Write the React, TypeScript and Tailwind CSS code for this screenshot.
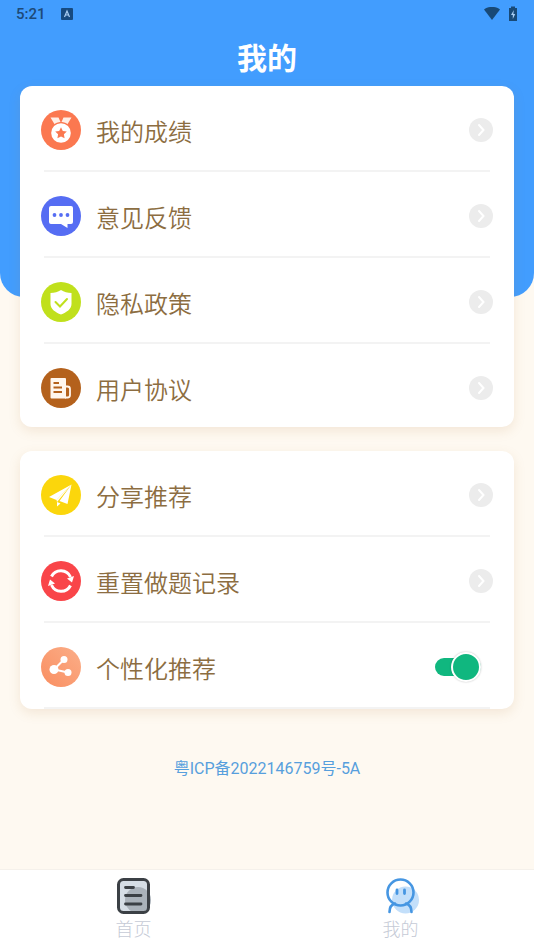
import React, { useState } from 'react';

interface MenuItem {
  label: string;
  icon: React.ReactNode;
}

const ScoreIcon = () => (
  <svg viewBox="0 0 40 40" className="size-10 shrink-0" aria-hidden="true">
    <circle cx="20" cy="20" r="20" fill="#fb7850" />
    <path d="M9.500 7.500h8l2 4.500-5.500 3zM30.500 7.500h-8l-2 4.500 5.500 3z" fill="#ffeee6" />
    <circle cx="20" cy="23" r="11" fill="#fb7850" />
    <circle cx="20" cy="23" r="9.800" fill="#fff" />
    <path
      d="M20 17.300l1.800 3.700 4 .5-2.900 2.800.7 4L20 26.400l-3.600 1.900.7-4-2.900-2.800 4-.5z"
      fill="#fb7850"
    />
  </svg>
);

const FeedbackIcon = () => (
  <svg viewBox="0 0 40 40" className="size-10 shrink-0" aria-hidden="true">
    <circle cx="20" cy="20" r="20" fill="#566df3" />
    <path d="M10 10h20a2 2 0 0 1 2 2v14a2 2 0 0 1-2 2h-3.500v4L20 28H10a2 2 0 0 1-2-2V12a2 2 0 0 1 2-2z" fill="#fff" />
    <circle cx="13.500" cy="19" r="1.900" fill="#566df3" />
    <circle cx="20" cy="19" r="1.900" fill="#566df3" />
    <circle cx="26.500" cy="19" r="1.900" fill="#566df3" />
  </svg>
);

const PrivacyIcon = () => (
  <svg viewBox="0 0 40 40" className="size-10 shrink-0" aria-hidden="true">
    <circle cx="20" cy="20" r="20" fill="#c0e01c" />
    <path d="M20 8c3 2 6.500 3 10.500 3v11c0 5-5 8.500-10.500 10.500C14.500 30.500 9.500 27 9.500 22V11c4 0 7.500-1 10.500-3z" fill="#fff" />
    <path d="M14.500 20l4.500 4.500 7-7.500" fill="none" stroke="#c0e01c" strokeWidth="2" strokeLinecap="round" />
  </svg>
);

const AgreementIcon = () => (
  <svg viewBox="0 0 40 40" className="size-10 shrink-0" aria-hidden="true">
    <circle cx="20" cy="20" r="20" fill="#b4611c" />
    <path d="M10.500 10H24a1 1 0 0 1 1 1v19.500H10.500a1 1 0 0 1-1-1V11a1 1 0 0 1 1-1z" fill="#fff6ee" />
    <path
      d="M25 18.500h1.500a2.500 2.500 0 0 1 2.500 2.500v6a2.500 2.500 0 0 1-2.500 2.500H24"
      fill="none"
      stroke="#fff6ee"
      strokeWidth="1.800"
    />
    <path d="M12.500 15h5.500M12.500 19.500h8.500M12.500 24h8.500" stroke="#b4611c" strokeWidth="1.800" />
  </svg>
);

const ShareIcon = () => (
  <svg viewBox="0 0 40 40" className="size-10 shrink-0" aria-hidden="true">
    <circle cx="20" cy="20" r="20" fill="#fbd60c" />
    <path d="M30.500 9.500L8 22l7.500 3zM30.500 9.500L18.500 26l8 3zM16 27v4.500l3.500-3z" fill="#fff" />
    <path d="M30.500 9.500L15.500 25l.5 2z" fill="#fff" />
  </svg>
);

const ResetIcon = () => (
  <svg viewBox="0 0 40 40" className="size-10 shrink-0" aria-hidden="true">
    <circle cx="20" cy="20" r="20" fill="#f94549" />
    <g fill="none" stroke="#fff" strokeWidth="3">
      <path d="M10.500 15.500a10.500 10.500 0 0 1 19 .5" />
      <path d="M29.500 24.500a10.500 10.500 0 0 1-19-.5" />
    </g>
    <path d="M33 15l-2 6.500-5-4zM7 25l2-6.500 5 4z" fill="#fff" />
  </svg>
);

const RecommendIcon = () => (
  <svg viewBox="0 0 40 40" className="size-10 shrink-0" aria-hidden="true">
    <defs>
      <linearGradient id="peach" x1="1" y1="0" x2="0" y2="1">
        <stop offset="0" stopColor="#fbae88" />
        <stop offset="1" stopColor="#f98e60" />
      </linearGradient>
    </defs>
    <circle cx="20" cy="20" r="20" fill="url(#peach)" />
    <path d="M23 12.500L13 22.500l14 3" fill="none" stroke="#fff" strokeWidth="2" />
    <circle cx="23" cy="12.500" r="3.500" fill="#fff" />
    <circle cx="13" cy="22.500" r="4.500" fill="#fff" />
    <circle cx="27" cy="25.500" r="3.500" fill="#fff" />
  </svg>
);

const ChevronIcon = () => (
  <svg viewBox="0 0 24 24" className="size-6 shrink-0" aria-hidden="true">
    <circle cx="12" cy="12" r="12" fill="#ececec" />
    <path d="M10 7l4.500 5-4.500 5" fill="none" stroke="#fff" strokeWidth="2" strokeLinecap="round" />
  </svg>
);

const HomeTabIcon = () => (
  <svg viewBox="0 0 36 36" className="size-9" aria-hidden="true">
    <rect x="2.500" y="1.500" width="30" height="33" rx="5" fill="#d5dde5" />
    <circle cx="22" cy="22" r="13" fill="#aab2ba" />
    <rect x="2.500" y="1.500" width="30" height="33" rx="5" fill="none" stroke="#3b4045" strokeWidth="3" />
    <path d="M9.500 9.500h8M9.500 17.500h15.500M9.500 26h15.500" stroke="#3b4045" strokeWidth="2.800" strokeLinecap="round" />
  </svg>
);

const MineTabIcon = () => (
  <svg viewBox="0 0 36 36" className="size-9" aria-hidden="true">
    <circle cx="22.500" cy="22" r="13.500" fill="#c3dffa" />
    <g fill="none" stroke="#4696e2" strokeWidth="2.600" strokeLinecap="round">
      <circle cx="17.500" cy="14.500" r="13" />
      <path d="M6.500 34c0-4.500 2-7.500 5.500-8.500M28.500 34c0-4.500-2-7.500-5.500-8.500" />
      <path d="M14 12v3.500M21.500 12v3.500" strokeWidth="2.800" />
    </g>
  </svg>
);

const mainItems: MenuItem[] = [
  { label: '我的成绩', icon: <ScoreIcon /> },
  { label: '意见反馈', icon: <FeedbackIcon /> },
  { label: '隐私政策', icon: <PrivacyIcon /> },
  { label: '用户协议', icon: <AgreementIcon /> },
];

const extraItems: MenuItem[] = [
  { label: '分享推荐', icon: <ShareIcon /> },
  { label: '重置做题记录', icon: <ResetIcon /> },
];

const MenuRow: React.FC<MenuItem> = ({ label, icon }) => (
  <button type="button" className="flex w-full items-center gap-[15px] pt-6 pb-5 text-left">
    {icon}
    <span className="flex-1 pt-1.5 text-2xl leading-8 font-[350]">{label}</span>
    <ChevronIcon />
  </button>
);

const Divider = () => <div className="mx-[3px] h-0.5 bg-[#f3f3f3]" />;

const StatusBar = () => (
  <div className="flex h-7 items-center justify-between px-4 text-[#1d4a78]">
    <div className="flex items-center gap-[15px]">
      <span className="text-[15px] leading-5 font-medium">5:21</span>
      <svg viewBox="0 0 12 12" className="size-3" aria-hidden="true">
        <rect width="12" height="12" rx="1" fill="#164a80" />
        <path d="M3.500 9L6 3l2.500 6M4.500 7h3" fill="none" stroke="#a9cdf2" strokeWidth="1.200" />
      </svg>
    </div>
    <div className="flex items-center gap-2">
      <svg viewBox="0 0 16 14" className="h-3.5 w-4" aria-hidden="true">
        <path d="M0 2.500C4.500-1 11.500-1 16 2.500L8 13z" fill="#184976" />
      </svg>
      <svg viewBox="0 0 10 16" className="h-4 w-2.5" aria-hidden="true">
        <path d="M3 0.500h4V2h2v13H1V2h2z" fill="#184976" />
        <path d="M5.800 4L3 9h1.800v4L7.200 8H5.400z" fill="#a9cdf2" />
      </svg>
    </div>
  </div>
);

const App: React.FC = () => {
  const [personalized, setPersonalized] = useState(true);

  return (
    <div className="flex min-h-screen flex-col bg-[#fef9f1] font-[Roboto,'Noto_Sans_CJK_SC',sans-serif]">
      <header className="h-[297px] rounded-b-3xl bg-[#429dfe]">
        <StatusBar />
        <h1 className="pt-[11px] text-center text-[30px] leading-10 font-bold text-white">我的</h1>
      </header>

      {/* Cards overlap the lower part of the header */}
      <main className="-mt-[211px] flex flex-1 flex-col px-5 text-[#8c6d41]">
        <ul className="rounded-xl bg-white px-[21px] shadow-[0_4px_12px_rgba(180,130,70,0.15)]">
          {mainItems.map((item, index) => (
            <li key={item.label} className="last:-mb-px">
              <MenuRow {...item} />
              {index < mainItems.length - 1 && <Divider />}
            </li>
          ))}
        </ul>

        <ul className="mt-6 rounded-xl bg-white px-[21px] shadow-[0_4px_12px_rgba(180,130,70,0.15)]">
          {extraItems.map((item) => (
            <li key={item.label}>
              <MenuRow {...item} />
              <Divider />
            </li>
          ))}
          <li>
            <label className="flex items-center gap-[15px] pt-6 pr-3 pb-5">
              <RecommendIcon />
              <span className="flex-1 pt-1.5 text-2xl leading-8 font-[350]">个性化推荐</span>
              <input
                type="checkbox"
                role="switch"
                checked={personalized}
                onChange={(e) => setPersonalized(e.target.checked)}
                className="flex h-[18px] w-[46px] appearance-none items-center rounded-full bg-gray-300 before:size-[30px] before:shrink-0 before:rounded-full before:border-2 before:border-white before:bg-gray-400 before:shadow-[0_0_2px_rgba(0,0,0,0.25)] checked:justify-end checked:bg-[#10b77f] checked:before:bg-[#10b77f]"
              />
            </label>
            <Divider />
          </li>
        </ul>

        <a href="#icp" className="mt-12 self-center text-base leading-6 text-[#579fdd]">
          粤ICP备2022146759号-5A
        </a>
      </main>

      <nav className="grid grid-cols-2 border-t border-[#f5f1eb] bg-white pt-2 text-lg leading-6 font-light text-[#c5cad6]">
        <a href="#home" className="flex flex-col items-center gap-1 pb-2">
          <HomeTabIcon />
          首页
        </a>
        <a href="#mine" aria-current="page" className="flex flex-col items-center gap-1 pb-2">
          <MineTabIcon />
          我的
        </a>
      </nav>
    </div>
  );
};

export default App;
